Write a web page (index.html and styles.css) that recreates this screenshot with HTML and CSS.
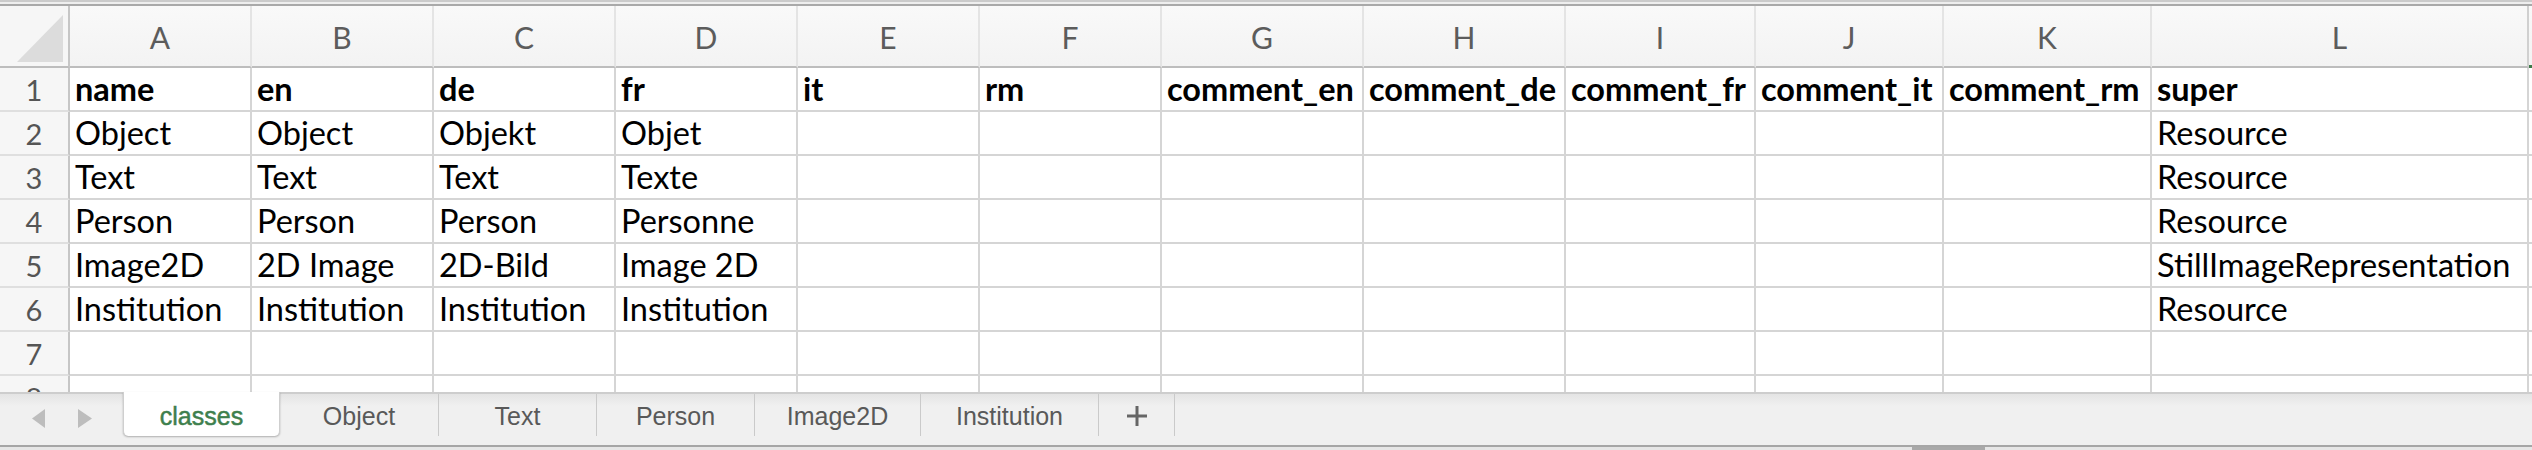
FILE: index.html
```html
<!DOCTYPE html>
<html>
<head>
<meta charset="utf-8">
<link rel="stylesheet" href="styles.css">
</head>
<body>
<div class="app">
  <div class="topbar"></div>
  <div class="sheet">
    <div class="corner"><svg width="68" height="60" viewBox="0 0 68 60"><polygon points="17,56 63,9 63,56" fill="#dcdcdc"/></svg></div>
    <div class="colhdr">A</div><div class="colhdr">B</div><div class="colhdr">C</div><div class="colhdr">D</div><div class="colhdr">E</div><div class="colhdr">F</div><div class="colhdr">G</div><div class="colhdr">H</div><div class="colhdr">I</div><div class="colhdr">J</div><div class="colhdr">K</div><div class="colhdr">L</div><div class="colhdr fill sel"></div>

    <div class="rowhdr">1</div>
    <div class="cell b">name</div><div class="cell b">en</div><div class="cell b">de</div><div class="cell b">fr</div><div class="cell b">it</div><div class="cell b">rm</div><div class="cell b">comment_en</div><div class="cell b">comment_de</div><div class="cell b">comment_fr</div><div class="cell b">comment_it</div><div class="cell b">comment_rm</div><div class="cell b">super</div><div class="cell fill"></div>

    <div class="rowhdr">2</div>
    <div class="cell">Object</div><div class="cell">Object</div><div class="cell">Objekt</div><div class="cell">Objet</div><div class="cell"></div><div class="cell"></div><div class="cell"></div><div class="cell"></div><div class="cell"></div><div class="cell"></div><div class="cell"></div><div class="cell">Resource</div><div class="cell fill"></div>

    <div class="rowhdr">3</div>
    <div class="cell">Text</div><div class="cell">Text</div><div class="cell">Text</div><div class="cell">Texte</div><div class="cell"></div><div class="cell"></div><div class="cell"></div><div class="cell"></div><div class="cell"></div><div class="cell"></div><div class="cell"></div><div class="cell">Resource</div><div class="cell fill"></div>

    <div class="rowhdr">4</div>
    <div class="cell">Person</div><div class="cell">Person</div><div class="cell">Person</div><div class="cell">Personne</div><div class="cell"></div><div class="cell"></div><div class="cell"></div><div class="cell"></div><div class="cell"></div><div class="cell"></div><div class="cell"></div><div class="cell">Resource</div><div class="cell fill"></div>

    <div class="rowhdr">5</div>
    <div class="cell">Image2D</div><div class="cell">2D Image</div><div class="cell">2D-Bild</div><div class="cell">Image 2D</div><div class="cell"></div><div class="cell"></div><div class="cell"></div><div class="cell"></div><div class="cell"></div><div class="cell"></div><div class="cell"></div><div class="cell">StillImageRepresentation</div><div class="cell fill"></div>

    <div class="rowhdr">6</div>
    <div class="cell">Institution</div><div class="cell">Institution</div><div class="cell">Institution</div><div class="cell">Institution</div><div class="cell"></div><div class="cell"></div><div class="cell"></div><div class="cell"></div><div class="cell"></div><div class="cell"></div><div class="cell"></div><div class="cell">Resource</div><div class="cell fill"></div>

    <div class="rowhdr">7</div>
    <div class="cell"></div><div class="cell"></div><div class="cell"></div><div class="cell"></div><div class="cell"></div><div class="cell"></div><div class="cell"></div><div class="cell"></div><div class="cell"></div><div class="cell"></div><div class="cell"></div><div class="cell"></div><div class="cell fill"></div>

    <div class="rowhdr">8</div>
    <div class="cell"></div><div class="cell"></div><div class="cell"></div><div class="cell"></div><div class="cell"></div><div class="cell"></div><div class="cell"></div><div class="cell"></div><div class="cell"></div><div class="cell"></div><div class="cell"></div><div class="cell"></div><div class="cell fill"></div>
  </div>
  <div class="tabbar">
    <div class="nav">
      <svg width="123" height="42" viewBox="0 0 123 42"><polygon points="45,-1 45,18 32,8.5" transform="translate(0,16)" fill="#bdbdbd"/><polygon points="78,-1 78,18 92,8.5" transform="translate(0,16)" fill="#bdbdbd"/></svg>
    </div>
    <div class="tab active t1">classes</div>
    <div class="tab t2">Object</div>
    <div class="tab t3">Text</div>
    <div class="tab t4">Person</div>
    <div class="tab t5">Image2D</div>
    <div class="tab t6">Institution</div>
    <div class="tab plus"><svg width="22" height="22" viewBox="0 0 22 22"><path d="M11 1V21M1 11H21" stroke="#666" stroke-width="3"/></svg></div>
  </div>
  <div class="hscroll"><div class="thumb"></div></div>
</div>
</body>
</html>
```

FILE: styles.css
```css
html, body {
  margin: 0;
  padding: 0;
  background: #ffffff;
}
body {
  width: 2532px;
  height: 450px;
  overflow: hidden;
}
.app {
  display: flex;
  flex-direction: column;
  width: 2532px;
  height: 450px;
}
.topbar {
  height: 2px;
  border-top: 2px solid #cbcbcb;
  border-bottom: 2px solid #a9a9a9;
  background: #eeeeee;
  flex: none;
}
.sheet {
  flex: none;
  height: 386px;
  overflow: hidden;
  display: grid;
  grid-template-columns: 70px repeat(6, 182px) 202px 202px 190px 188px 208px 377px 3px;
  grid-template-rows: 62px repeat(8, 44px);
  font-family: "Lato", "Liberation Sans", sans-serif;
}
.sheet > div {
  box-sizing: border-box;
  overflow: hidden;
  white-space: nowrap;
}
.corner {
  background: #f6f6f6;
  border-right: 2px solid #c6c6c6;
  border-bottom: 2px solid #bdbdbd;
}
.corner svg { display: block; }
.colhdr {
  background: linear-gradient(#f9f9f9, #f3f3f3);
  border-right: 2px solid #e4e4e4;
  border-bottom: 2px solid #bdbdbd;
  display: flex;
  align-items: center;
  justify-content: center;
  font-size: 30px;
  color: #5c5c5c;
  padding-top: 1px;
}
.colhdr:nth-child(13) { border-right: 2px solid #d0d0d0; }
.colhdr.fill { border-right: none; }
.colhdr.sel { border-bottom: 3px solid #3d7a48; }
.rowhdr {
  background: #f6f6f6;
  border-right: 2px solid #c6c6c6;
  border-bottom: 2px solid #dfdfdf;
  display: flex;
  align-items: flex-end;
  justify-content: center;
  font-size: 29px;
  line-height: 30px;
  padding-bottom: 5px;
  color: #555555;
}
.cell {
  border-right: 2px solid #d5d5d5;
  border-bottom: 2px solid #d5d5d5;
  display: flex;
  align-items: flex-end;
  padding-left: 5px;
  padding-bottom: 6px;
  font-size: 32.5px;
  line-height: 30px;
  color: #000000;
}
.cell.b { font-weight: 700; }
.cell.fill { border-right: none; padding: 0; }
.tabbar {
  flex: none;
  height: 51px;
  border-top: 2px solid #cdcdcd;
  border-bottom: 2px solid #a6a6a6;
  background: linear-gradient(#e4e4e4 0px, #f0f0f0 12px, #f0f0f0 100%);
  display: flex;
  align-items: flex-start;
  font-family: "Liberation Sans", Arial, sans-serif;
  font-size: 25px;
  color: #595959;
}
.nav {
  width: 123px;
  height: 42px;
  flex: none;
}
.nav svg { display: block; }
.tab {
  box-sizing: border-box;
  height: 42px;
  flex: none;
  display: flex;
  align-items: center;
  justify-content: center;
  border-right: 1px solid #cacaca;
  padding-top: 2px;
}
.tab.active {
  height: 44px;
  margin-top: -2px;
  background: #ffffff;
  color: #3e7f4d;
  border-left: 1px solid #cfcfcf;
  border-right: 1px solid #cfcfcf;
  border-radius: 0 0 5px 5px;
  box-shadow: 0 1px 2px rgba(0, 0, 0, 0.28);
  -webkit-text-stroke: 0.5px #3e7f4d;
  padding-top: 4px;
  position: relative;
  z-index: 1;
}
.t1 { width: 157px; }
.t2 { width: 159px; }
.t3 { width: 158px; }
.t4 { width: 158px; }
.t5 { width: 166px; }
.t6 { width: 178px; }
.plus { width: 76px; }
.plus svg { display: block; }
.hscroll {
  flex: none;
  height: 3px;
  background: #e6e6e6;
  display: flex;
  padding-left: 1912px;
}
.thumb {
  width: 73px;
  height: 3px;
  background: #a9a9a9;
}
```
